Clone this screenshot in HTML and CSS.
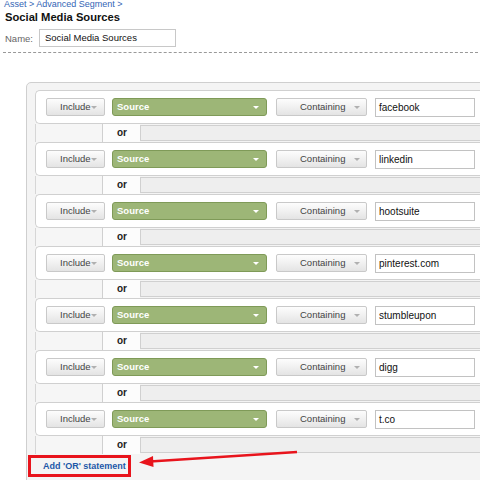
FILE: index.html
```html
<!DOCTYPE html>
<html>
<head>
<meta charset="utf-8">
<link rel="stylesheet" href="styles.css">
</head>
<body>
<div class="page">
  <div class="crumb"><a>Asset</a> &gt; <a>Advanced Segment</a> &gt;</div>
  <h1 class="title">Social Media Sources</h1>
  <div class="name-row">
    <span class="name-label">Name:</span>
    <div class="name-input">Social Media Sources</div>
  </div>
  <div class="dash"></div>

  <div class="panel">
    <div class="rule"><div class="ctl inc">Include<span class="tri"></span></div><div class="src">Source<span class="wtri"></span></div><div class="ctl cont">Containing<span class="tri"></span></div><div class="val">facebook</div></div>
    <div class="or"><div class="or-l"></div><div class="or-t">or</div><div class="or-r"></div></div>
    <div class="rule"><div class="ctl inc">Include<span class="tri"></span></div><div class="src">Source<span class="wtri"></span></div><div class="ctl cont">Containing<span class="tri"></span></div><div class="val">linkedin</div></div>
    <div class="or"><div class="or-l"></div><div class="or-t">or</div><div class="or-r"></div></div>
    <div class="rule"><div class="ctl inc">Include<span class="tri"></span></div><div class="src">Source<span class="wtri"></span></div><div class="ctl cont">Containing<span class="tri"></span></div><div class="val">hootsuite</div></div>
    <div class="or"><div class="or-l"></div><div class="or-t">or</div><div class="or-r"></div></div>
    <div class="rule"><div class="ctl inc">Include<span class="tri"></span></div><div class="src">Source<span class="wtri"></span></div><div class="ctl cont">Containing<span class="tri"></span></div><div class="val">pinterest.com</div></div>
    <div class="or"><div class="or-l"></div><div class="or-t">or</div><div class="or-r"></div></div>
    <div class="rule"><div class="ctl inc">Include<span class="tri"></span></div><div class="src">Source<span class="wtri"></span></div><div class="ctl cont">Containing<span class="tri"></span></div><div class="val">stumbleupon</div></div>
    <div class="or"><div class="or-l"></div><div class="or-t">or</div><div class="or-r"></div></div>
    <div class="rule"><div class="ctl inc">Include<span class="tri"></span></div><div class="src">Source<span class="wtri"></span></div><div class="ctl cont">Containing<span class="tri"></span></div><div class="val">digg</div></div>
    <div class="or"><div class="or-l"></div><div class="or-t">or</div><div class="or-r"></div></div>
    <div class="rule"><div class="ctl inc">Include<span class="tri"></span></div><div class="src">Source<span class="wtri"></span></div><div class="ctl cont">Containing<span class="tri"></span></div><div class="val">t.co</div></div>
    <div class="or"><div class="or-l"></div><div class="or-t">or</div><div class="or-r"></div></div>
    <div class="add"><a class="add-link">Add 'OR' statement</a></div>
  </div>

  <div class="hl-box"></div>
  <svg class="arrow" width="480" height="480" viewBox="0 0 480 480">
    <line x1="297" y1="452" x2="150" y2="461.5" stroke="#e8141c" stroke-width="2.6"/>
    <polygon points="139,462.5 153,456 153.5,467" fill="#e8141c"/>
  </svg>
</div>
</body>
</html>
```

FILE: styles.css
```css
html, body {
  margin: 0;
  padding: 0;
  background: #fff;
}
.page {
  position: relative;
  width: 480px;
  height: 480px;
  overflow: hidden;
  font-family: "Liberation Sans", Arial, sans-serif;
  font-size: 9.5px;
  color: #222;
}
.crumb {
  margin: 0 0 0 4px;
  height: 10px;
  line-height: 9px;
  color: #3465b5;
  font-size: 9px;
}
.crumb a { color: #3465b5; }
.title {
  margin: 0 0 0 5px;
  font-size: 11.2px;
  line-height: 14px;
  font-weight: bold;
  color: #111;
}
.name-row {
  display: flex;
  align-items: center;
  margin: 5px 0 0 5px;
  height: 18px;
}
.name-label {
  color: #666;
  width: 34px;
}
.name-input {
  width: 130px;
  height: 16px;
  line-height: 16px;
  border: 1px solid #c8c8c8;
  padding-left: 5px;
  color: #111;
}
.dash {
  margin: 5px 2px 0 3px;
  border-top: 1px dashed #999;
  height: 0;
}
.panel {
  margin: 29px 0 0 26px;
  width: 500px;
  height: 420px;
  border: 1px solid #cfcfcf;
  border-radius: 5px;
  background: #f4f4f4;
  padding: 7px 0 0 8px;
  box-sizing: border-box;
}
.rule {
  display: flex;
  align-items: center;
  height: 34px;
  box-sizing: border-box;
  border: 1px solid #d0d0d0;
  border-right: none;
  border-radius: 5px 0 0 5px;
  background: #fff;
  padding-left: 10px;
}
.ctl {
  position: relative;
  height: 18px;
  box-sizing: border-box;
  border: 1px solid #c9c9c9;
  border-radius: 2px;
  background: linear-gradient(#fdfdfd, #e4e4e4);
  line-height: 16px;
  color: #444;
}
.inc {
  width: 59px;
  padding-left: 13px;
}
.inc .tri { left: 44px; }
.cont {
  width: 91px;
  padding-left: 23px;
  margin-left: 9px;
}
.cont .tri { left: 77px; }
.tri {
  position: absolute;
  top: 7px;
  width: 0;
  height: 0;
  border-left: 3.5px solid transparent;
  border-right: 3.5px solid transparent;
  border-top: 3px solid #b0b0b0;
}
.src {
  position: relative;
  width: 155px;
  height: 18px;
  box-sizing: border-box;
  margin-left: 7px;
  border: 1px solid #7f9a58;
  border-radius: 3px;
  background: #9db677;
  color: #fff;
  font-weight: bold;
  font-size: 9.5px;
  line-height: 16px;
  padding-left: 4px;
}
.wtri {
  position: absolute;
  left: 140px;
  top: 7px;
  width: 0;
  height: 0;
  border-left: 3.5px solid transparent;
  border-right: 3.5px solid transparent;
  border-top: 3px solid #fff;
}
.val {
  width: 100px;
  height: 19px;
  box-sizing: border-box;
  margin-left: 8px;
  border: 1px solid #c2c2c2;
  line-height: 17px;
  padding-left: 3px;
  color: #111;
  background: #fff;
  font-size: 10px;
}
.or {
  display: flex;
  height: 18px;
}
.or-l {
  width: 66px;
  border-left: 1px solid #d6d6d6;
  border-right: 1px solid #d0d0d0;
  background: #f6f6f6;
}
.or-t {
  width: 37px;
  padding-left: 14px;
  box-sizing: border-box;
  line-height: 18px;
  font-weight: bold;
  font-size: 10px;
  color: #222;
  background: #fcfcfc;
}
.or-r {
  flex: 1;
  margin: 1px 0;
  border: 1px solid #d0d0d0;
  border-right: none;
  background: #eeeeee;
}
.add {
  padding: 6px 0 0 8px;
  line-height: 12px;
}
.add-link {
  color: #1d58a8;
  font-weight: bold;
  font-size: 9px;
}
.hl-box {
  position: absolute;
  left: 28px;
  top: 455px;
  width: 97px;
  height: 16px;
  border: 3px solid #e8141c;
}
.arrow {
  position: absolute;
  left: 0;
  top: 0;
}
```
